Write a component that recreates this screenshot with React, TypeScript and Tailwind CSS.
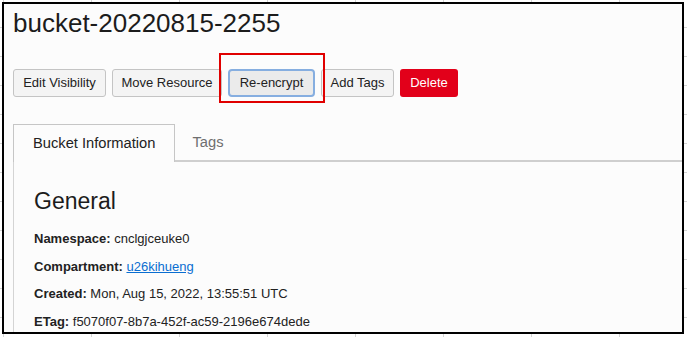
import React from "react";

export default function App() {
  return (
    <div className="relative w-[687px] h-[337px] overflow-hidden bg-white bg-[linear-gradient(to_right,#d4d4d4_1px,transparent_1px),linear-gradient(to_bottom,#d4d4d4_1px,transparent_1px)] bg-[size:88px_29px] bg-[position:3px_27px] pt-[2px] pl-[2px] font-['Liberation_Sans',Arial,sans-serif]">
      <div className="w-[682px] h-[332px] border-2 border-black bg-[#fcfcfc] flex flex-col pt-[4px] pl-[9px]">
        <h1 className="text-[26px] leading-[30px] text-[#1c1c1c] font-normal">bucket-20220815-2255</h1>
        <div className="mt-[31px] flex gap-[6px] text-[13px] text-[#222]">
          <button className="w-[93px] h-[28px] rounded-[3px] border border-[#c4c4c4] bg-[#f4f4f4] flex items-center justify-center">Edit Visibility</button>
          <button className="w-[110px] h-[28px] rounded-[3px] border border-[#c4c4c4] bg-[#f4f4f4] flex items-center justify-center">Move Resource</button>
          <button className="w-[87px] h-[28px] rounded-[4px] border-2 border-[#86aee0] bg-[#ebebeb] flex items-center justify-center">Re-encrypt</button>
          <button className="w-[73px] h-[28px] rounded-[3px] border border-[#c4c4c4] bg-[#f4f4f4] flex items-center justify-center">Add Tags</button>
          <button className="w-[58px] h-[28px] rounded-[3px] bg-[#e2001a] text-white flex items-center justify-center">Delete</button>
        </div>
        <div className="mt-[27px] flex border-b-2 border-[#cfcfcf] text-[14.7px]">
          <div className="h-[38px] -mb-[2px] px-[19px] border border-b-0 border-[#c6c6c6] bg-[#fcfcfc] flex items-center text-[#222]">Bucket Information</div>
          <div className="h-[36px] px-[17px] flex items-center text-[#6f6f6f]">Tags</div>
        </div>
        <div className="flex-1 border-l border-[#d4d4d4] pl-[20px] flex flex-col text-[#222]">
          <h2 className="mt-[25px] text-[23px] leading-[28px] font-normal text-[#1c1c1c]">General</h2>
          <div className="mt-[16px] flex flex-col gap-[11.7px] text-[13px] leading-[16px]">
            <div><span className="font-bold">Namespace:</span> cnclgjceuke0</div>
            <div><span className="font-bold">Compartment:</span> <a className="text-[#0a6ed1] underline">u26kihueng</a></div>
            <div><span className="font-bold">Created:</span> Mon, Aug 15, 2022, 13:55:51 UTC</div>
            <div><span className="font-bold">ETag:</span> f5070f07-8b7a-452f-ac59-2196e674dede</div>
          </div>
        </div>
      </div>
      <div className="absolute left-[219px] top-[53px] w-[106px] h-[50px] border-2 border-[#e00000]" />
    </div>
  );
}
